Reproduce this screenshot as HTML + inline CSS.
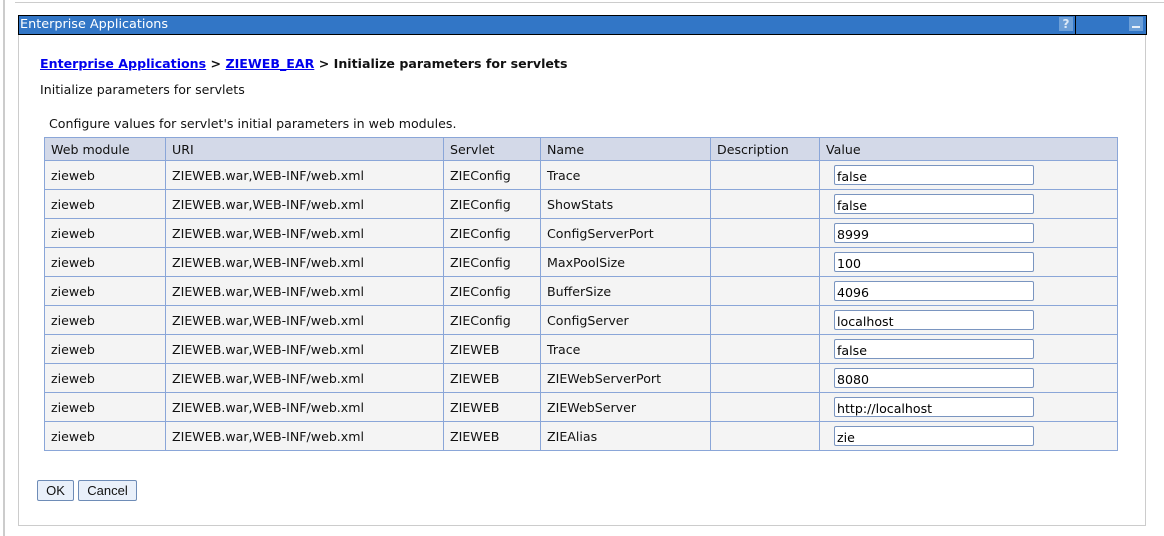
<!DOCTYPE html>
<html><head><meta charset="utf-8"><style>
body{margin:0;width:1164px;height:536px;background:#fff;font-family:"DejaVu Sans","Liberation Sans",sans-serif;font-size:12.6px;color:#111;position:relative;overflow:hidden}
.a{position:absolute}
table{border-collapse:collapse;position:absolute;left:44px;top:137px;width:1074px;table-layout:fixed}
td,th{border:1px solid #8aa6d8;height:28px;padding:0 0 0 6px;text-align:left;font-weight:normal;background:#f4f4f4;white-space:nowrap;overflow:hidden}
th{background:#d3d9e8;height:22px}
input{font:inherit;font-size:12.6px;width:194px;height:16px;border:1px solid #7a95c0;border-radius:2px;padding:2px 2px 0;margin-left:8px;background:#fff}
.btn{position:absolute;top:480px;height:19px;border:1px solid #6e8cb7;border-radius:2px;background:#e9f0fa;font-family:"Liberation Sans",sans-serif;font-size:13px;text-align:center;line-height:19px}
a{color:#0000ee}
</style></head><body>
<div class="a" style="left:15px;top:2px;width:1149px;height:1px;background:#ccc"></div>
<div class="a" style="left:3px;top:0;width:2px;height:536px;background:#ccc"></div>
<div class="a" style="left:18px;top:15px;width:1126px;height:510px;border:1px solid #ccc;border-top:none"></div>
<div class="a" style="left:18px;top:15px;width:1126px;height:18px;background:#3276c6;border:1px solid #000;color:#fff;font-size:12.8px;line-height:18px;padding-left:1px;box-sizing:content-box">Enterprise Applications</div>
<div class="a" style="left:1075px;top:16px;width:1px;height:18px;background:#000"></div>
<div class="a" style="left:1059px;top:17px;width:14px;height:14px;background:#6c9fd8;color:#dce9f7;font-weight:bold;font-size:12px;text-align:center;line-height:14px">?</div>
<div class="a" style="left:1129px;top:17px;width:14px;height:14px;background:#6c9fd8"><div style="position:absolute;left:3px;top:9px;width:8px;height:2px;background:#e6eef8"></div></div>
<div class="a" style="left:40px;top:56px;font-size:12.6px;font-weight:bold"><a href="#">Enterprise Applications</a> &gt; <a href="#">ZIEWEB_EAR</a> &gt; Initialize parameters for servlets</div>
<div class="a" style="left:40px;top:82px">Initialize parameters for servlets</div>
<div class="a" style="left:49px;top:116px">Configure values for servlet's initial parameters in web modules.</div>
<table>
<colgroup><col style="width:121px"><col style="width:278px"><col style="width:97px"><col style="width:170px"><col style="width:109px"><col></colgroup>
<tr><th>Web module</th><th>URI</th><th>Servlet</th><th>Name</th><th>Description</th><th>Value</th></tr>
<tr><td>zieweb</td><td>ZIEWEB.war,WEB-INF/web.xml</td><td>ZIEConfig</td><td>Trace</td><td></td><td><input value="false"></td></tr>
<tr><td>zieweb</td><td>ZIEWEB.war,WEB-INF/web.xml</td><td>ZIEConfig</td><td>ShowStats</td><td></td><td><input value="false"></td></tr>
<tr><td>zieweb</td><td>ZIEWEB.war,WEB-INF/web.xml</td><td>ZIEConfig</td><td>ConfigServerPort</td><td></td><td><input value="8999"></td></tr>
<tr><td>zieweb</td><td>ZIEWEB.war,WEB-INF/web.xml</td><td>ZIEConfig</td><td>MaxPoolSize</td><td></td><td><input value="100"></td></tr>
<tr><td>zieweb</td><td>ZIEWEB.war,WEB-INF/web.xml</td><td>ZIEConfig</td><td>BufferSize</td><td></td><td><input value="4096"></td></tr>
<tr><td>zieweb</td><td>ZIEWEB.war,WEB-INF/web.xml</td><td>ZIEConfig</td><td>ConfigServer</td><td></td><td><input value="localhost"></td></tr>
<tr><td>zieweb</td><td>ZIEWEB.war,WEB-INF/web.xml</td><td>ZIEWEB</td><td>Trace</td><td></td><td><input value="false"></td></tr>
<tr><td>zieweb</td><td>ZIEWEB.war,WEB-INF/web.xml</td><td>ZIEWEB</td><td>ZIEWebServerPort</td><td></td><td><input value="8080"></td></tr>
<tr><td>zieweb</td><td>ZIEWEB.war,WEB-INF/web.xml</td><td>ZIEWEB</td><td>ZIEWebServer</td><td></td><td><input value="http://localhost"></td></tr>
<tr><td>zieweb</td><td>ZIEWEB.war,WEB-INF/web.xml</td><td>ZIEWEB</td><td>ZIEAlias</td><td></td><td><input value="zie"></td></tr>
</table>
<div class="btn" style="left:37px;width:35px">OK</div>
<div class="btn" style="left:78px;width:57px">Cancel</div>
</body></html>
